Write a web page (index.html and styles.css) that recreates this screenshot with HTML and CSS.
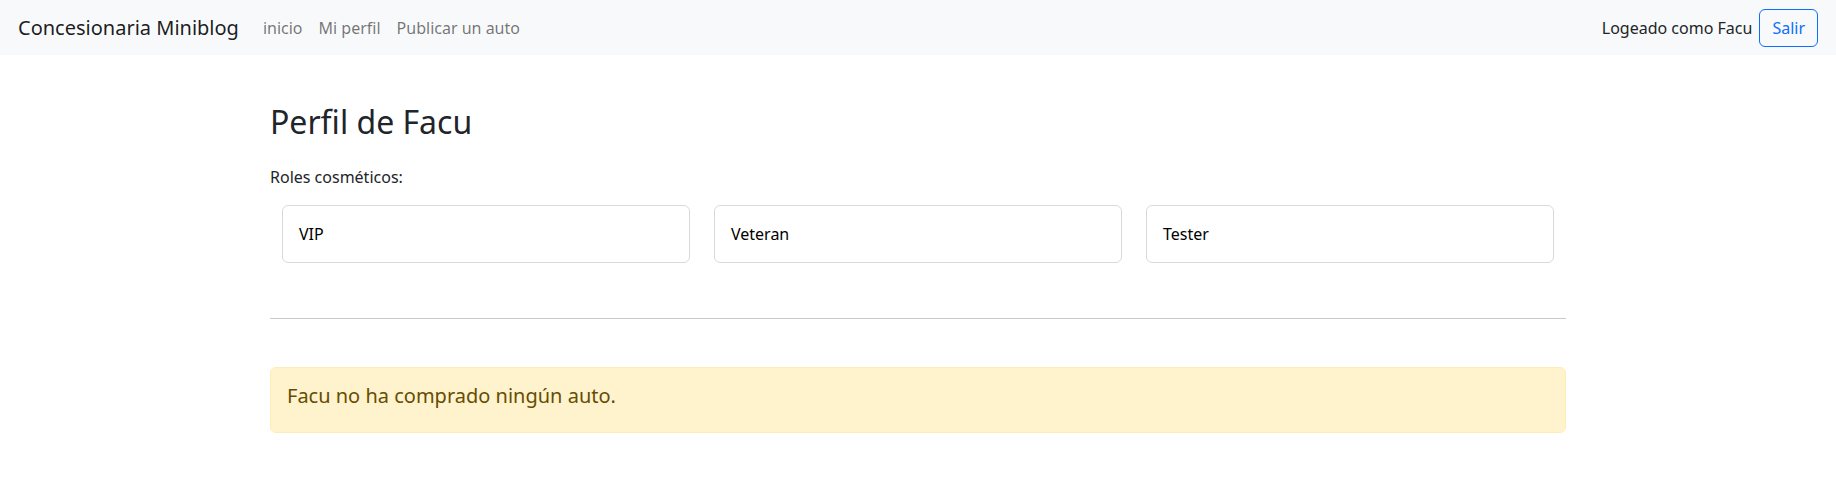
FILE: index.html
```html
<!DOCTYPE html>
<html lang="es">
<head>
<meta charset="utf-8">
<title>Perfil de Facu</title>
<link rel="stylesheet" href="styles.css">
</head>
<body>
<nav class="navbar">
  <a class="brand" href="#">Concesionaria Miniblog</a>
  <ul class="nav">
    <li><a class="nav-link" href="#">inicio</a></li>
    <li><a class="nav-link" href="#">Mi perfil</a></li>
    <li><a class="nav-link" href="#">Publicar un auto</a></li>
  </ul>
  <div class="user">
    <span class="user-text">Logeado como Facu</span>
    <button class="btn-outline">Salir</button>
  </div>
</nav>
<main class="container">
  <h2 class="title">Perfil de Facu</h2>
  <p class="roles-label">Roles cosméticos:</p>
  <div class="roles">
    <div class="col"><div class="card">VIP</div></div>
    <div class="col"><div class="card">Veteran</div></div>
    <div class="col"><div class="card">Tester</div></div>
  </div>
  <hr class="divider">
  <div class="alert">
    <h5 class="alert-text">Facu no ha comprado ningún auto.</h5>
  </div>
</main>
</body>
</html>
```

FILE: styles.css
```css
* { box-sizing: border-box; }
body {
  margin: 0;
  font-family: "Noto Sans", "DejaVu Sans", sans-serif;
  font-size: 16px;
  line-height: 1.5;
  color: #212529;
  background: #fff;
}
a { text-decoration: none; }

.navbar {
  display: flex;
  align-items: center;
  height: 55px;
  padding: 0 18px 0 18px;
  background: #f8f9fa;
}
.brand {
  font-size: 20px;
  line-height: 30px;
  color: rgba(0, 0, 0, 0.9);
  margin-right: 16px;
}
.nav {
  display: flex;
  list-style: none;
  margin: 0;
  padding: 0;
}
.nav-link {
  display: block;
  padding: 8px;
  color: rgba(0, 0, 0, 0.55);
}
.user {
  margin-left: auto;
  display: flex;
  align-items: center;
}
.user-text { margin-right: 7px; }
.btn-outline {
  font-family: inherit;
  font-size: 16px;
  line-height: 24px;
  padding: 6px 12px;
  color: #0d6efd;
  background: transparent;
  border: 1px solid #0d6efd;
  border-radius: 6px;
}

.container {
  width: 1296px;
  margin: 48px auto 0;
}
.title {
  font-size: 32px;
  font-weight: 400;
  line-height: 1.2;
  margin: 0 0 24px;
}
.roles-label { margin: 0 0 16px; }
.roles {
  display: grid;
  grid-template-columns: repeat(3, 1fr);
}
.col { padding: 0 12px; }
.card {
  border: 1px solid rgba(0, 0, 0, 0.15);
  border-radius: 6px;
  padding: 16px;
  color: #000;
}
.divider {
  margin: 55px 0 48px;
  border: 0;
  border-top: 1px solid #212529;
  opacity: 0.25;
}
.alert {
  background: #fff3cd;
  border: 1px solid #ffecb5;
  border-radius: 6px;
  padding: 16px;
  color: #664d03;
}
.alert-text {
  font-size: 20px;
  font-weight: 400;
  line-height: 1.2;
  margin: 0 0 8px;
}
```
